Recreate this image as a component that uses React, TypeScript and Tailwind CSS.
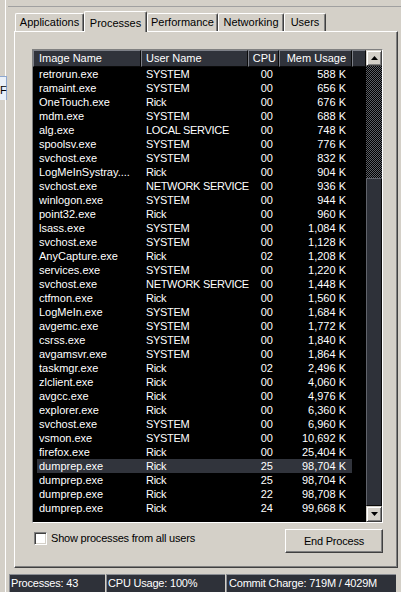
import React from "react";

type Proc = [string, string, string, string];

const PROCS: Proc[] = [
  ["retrorun.exe", "SYSTEM", "00", "588 K"],
  ["ramaint.exe", "SYSTEM", "00", "656 K"],
  ["OneTouch.exe", "Rick", "00", "676 K"],
  ["mdm.exe", "SYSTEM", "00", "688 K"],
  ["alg.exe", "LOCAL SERVICE", "00", "748 K"],
  ["spoolsv.exe", "SYSTEM", "00", "776 K"],
  ["svchost.exe", "SYSTEM", "00", "832 K"],
  ["LogMeInSystray....", "Rick", "00", "904 K"],
  ["svchost.exe", "NETWORK SERVICE", "00", "936 K"],
  ["winlogon.exe", "SYSTEM", "00", "944 K"],
  ["point32.exe", "Rick", "00", "960 K"],
  ["lsass.exe", "SYSTEM", "00", "1,084 K"],
  ["svchost.exe", "SYSTEM", "00", "1,128 K"],
  ["AnyCapture.exe", "Rick", "02", "1,208 K"],
  ["services.exe", "SYSTEM", "00", "1,220 K"],
  ["svchost.exe", "NETWORK SERVICE", "00", "1,448 K"],
  ["ctfmon.exe", "Rick", "00", "1,560 K"],
  ["LogMeIn.exe", "SYSTEM", "00", "1,684 K"],
  ["avgemc.exe", "SYSTEM", "00", "1,772 K"],
  ["csrss.exe", "SYSTEM", "00", "1,840 K"],
  ["avgamsvr.exe", "SYSTEM", "00", "1,864 K"],
  ["taskmgr.exe", "Rick", "02", "2,496 K"],
  ["zlclient.exe", "Rick", "00", "4,060 K"],
  ["avgcc.exe", "Rick", "00", "4,976 K"],
  ["explorer.exe", "Rick", "00", "6,360 K"],
  ["svchost.exe", "SYSTEM", "00", "6,960 K"],
  ["vsmon.exe", "SYSTEM", "00", "10,692 K"],
  ["firefox.exe", "Rick", "00", "25,404 K"],
  ["dumprep.exe", "Rick", "25", "98,704 K"],
  ["dumprep.exe", "Rick", "25", "98,704 K"],
  ["dumprep.exe", "Rick", "22", "98,708 K"],
  ["dumprep.exe", "Rick", "24", "99,668 K"],
];

const SELECTED = 28;

const TABS = [
  { label: "Applications", w: "w-[69px]" },
  { label: "Processes", w: "w-[63px]", active: true },
  { label: "Performance", w: "w-[71px]" },
  { label: "Networking", w: "w-[66px]" },
  { label: "Users", w: "w-[42px]" },
];

const raised =
  "border border-t-white border-l-white border-r-[#404040] border-b-[#404040] shadow-[inset_-1px_-1px_0_#808080]";

const headCell =
  "h-[17px] shrink-0 flex items-center bg-[#30333b] border border-t-[#7d8088] border-l-[#7d8088] border-r-[#0a0a0a] border-b-[#0a0a0a] text-white";

const statusCell =
  "bg-[#2e3139] border-t border-l border-[#8a8d93] text-white leading-[16px] whitespace-nowrap tracking-[-0.2px]";

const ArrowButton = ({ up }: { up?: boolean }) => (
  <div className="w-[16px] h-[16px] shrink-0 flex items-center justify-center bg-[#d4d0c8] border border-t-[#d4d0c8] border-l-[#d4d0c8] border-r-[#404040] border-b-[#404040] shadow-[inset_1px_1px_0_#fff,inset_-1px_-1px_0_#808080]">
    <svg width="7" height="4" viewBox="0 0 7 4">
      {up ? <path d="M3.5 0L7 4H0Z" fill="#000" /> : <path d="M0 0H7L3.5 4Z" fill="#000" />}
    </svg>
  </div>
);

const App = () => {
  return (
    <div className="w-[401px] h-[592px] bg-[#d4d0c8] flex overflow-hidden font-['Liberation_Sans',Arial,sans-serif] text-[11px] text-black">
      {/* edge of the window behind */}
      <div className="w-[7px] shrink-0 flex flex-col">
        <div className="w-[6px] h-[76px] border-r border-white" />
        <div className="w-[7px] h-[24px] bg-[#eaf0f8] border-t border-r border-[#8ea8d0] pt-[7px] leading-[12px] text-[11px]">
          F
        </div>
        <div className="w-[6px] flex-1 border-r border-white" />
      </div>

      <div className="flex-1 flex flex-col">
        <div className="h-[7px] ml-[1px] border-b border-[#a0a0a0]" />

        {/* tabs */}
        <div className="h-[24px] pl-[8px] flex items-end">
          {TABS.map((t) => (
            <div
              key={t.label}
              className={
                t.active
                  ? `${t.w} h-[21px] -mb-px relative z-10 bg-[#d4d0c8] flex items-start pt-[3px] justify-center rounded-t-[2px] border-t border-l border-white border-r border-r-[#404040] shadow-[inset_-1px_0_0_#808080]`
                  : `${t.w} h-[18px] flex items-center justify-center rounded-t-[2px] border-t border-l border-white border-r border-r-[#404040] shadow-[inset_-1px_0_0_#808080]`
              }
            >
              {t.label}
            </div>
          ))}
        </div>

        {/* tab page */}
        <div className={`ml-[7px] w-[384px] h-[537px] flex flex-col ${raised}`}>
          <div className="ml-[17px] mt-[17px] w-[351px] h-[474px] bg-black flex border border-t-[#808080] border-l-[#808080] border-r-white border-b-white">
            <div className="w-[333px] flex flex-col">
              <div className="flex">
                <div className={`${headCell} w-[108px] pl-[5px]`}>Image Name</div>
                <div className={`${headCell} w-[107px] pl-[4px]`}>User Name</div>
                <div className={`${headCell} w-[31px] justify-end pr-[2px]`}>CPU</div>
                <div className={`${headCell} w-[73px] justify-end pr-[5px]`}>Mem Usage</div>
                <div className={`${headCell} w-[14px]`} />
              </div>
              {PROCS.map((p, i) => (
                <div
                  key={i}
                  className={`ml-[4px] w-[315px] h-[14px] leading-[14px] flex text-white whitespace-nowrap ${
                    i === SELECTED ? "bg-[#31343c]" : ""
                  }`}
                >
                  <div className="w-[104px] pl-[2px]">{p[0]}</div>
                  <div className="w-[107px] pl-[5px] tracking-[-0.3px]">{p[1]}</div>
                  <div className="w-[31px] pr-[6px] text-right">{p[2]}</div>
                  <div className="w-[73px] pr-[6px] text-right">{p[3]}</div>
                </div>
              ))}
            </div>

            {/* scrollbar */}
            <div className="w-[16px] flex flex-col">
              <ArrowButton up />
              <div className="h-[112px] bg-[image:repeating-conic-gradient(#000_0%_25%,#5c5f66_0%_50%)] bg-size-[2px_2px]" />
              <div className="flex-1 bg-[#2e3139] border border-t-[#60636b] border-l-[#60636b] border-r-[#0a0a0a] border-b-[#0a0a0a]" />
              <ArrowButton />
            </div>
          </div>

          <div className="ml-[17px] mt-[6px] w-[351px] h-[24px] flex items-start justify-between">
            <div className="ml-[2px] mt-[3px] flex items-center">
              <div className="w-[13px] h-[13px] bg-white border border-t-[#808080] border-l-[#808080] border-r-white border-b-white shadow-[inset_1px_1px_0_#404040,inset_-1px_-1px_0_#d4d0c8]" />
              <span className="ml-[4px] leading-[13px] tracking-[-0.2px]">Show processes from all users</span>
            </div>
            <button className="w-[98px] h-[24px] bg-[#d4d0c8] border border-t-white border-l-white border-r-[#404040] border-b-[#404040] shadow-[inset_-1px_-1px_0_#808080] flex items-center justify-center tracking-[-0.2px]">
              End Process
            </button>
          </div>
        </div>

        {/* status bar */}
        <div className="mt-[6px] ml-[2px] h-[18px] flex gap-px">
          <div className={`${statusCell} w-[96px] pl-[1px]`}>Processes: 43</div>
          <div className={`${statusCell} w-[119px] pl-[1px]`}>CPU Usage: 100%</div>
          <div className={`${statusCell} w-[170px] pl-[2px]`}>Commit Charge: 719M / 4029M</div>
        </div>
      </div>
    </div>
  );
};

export default App;
